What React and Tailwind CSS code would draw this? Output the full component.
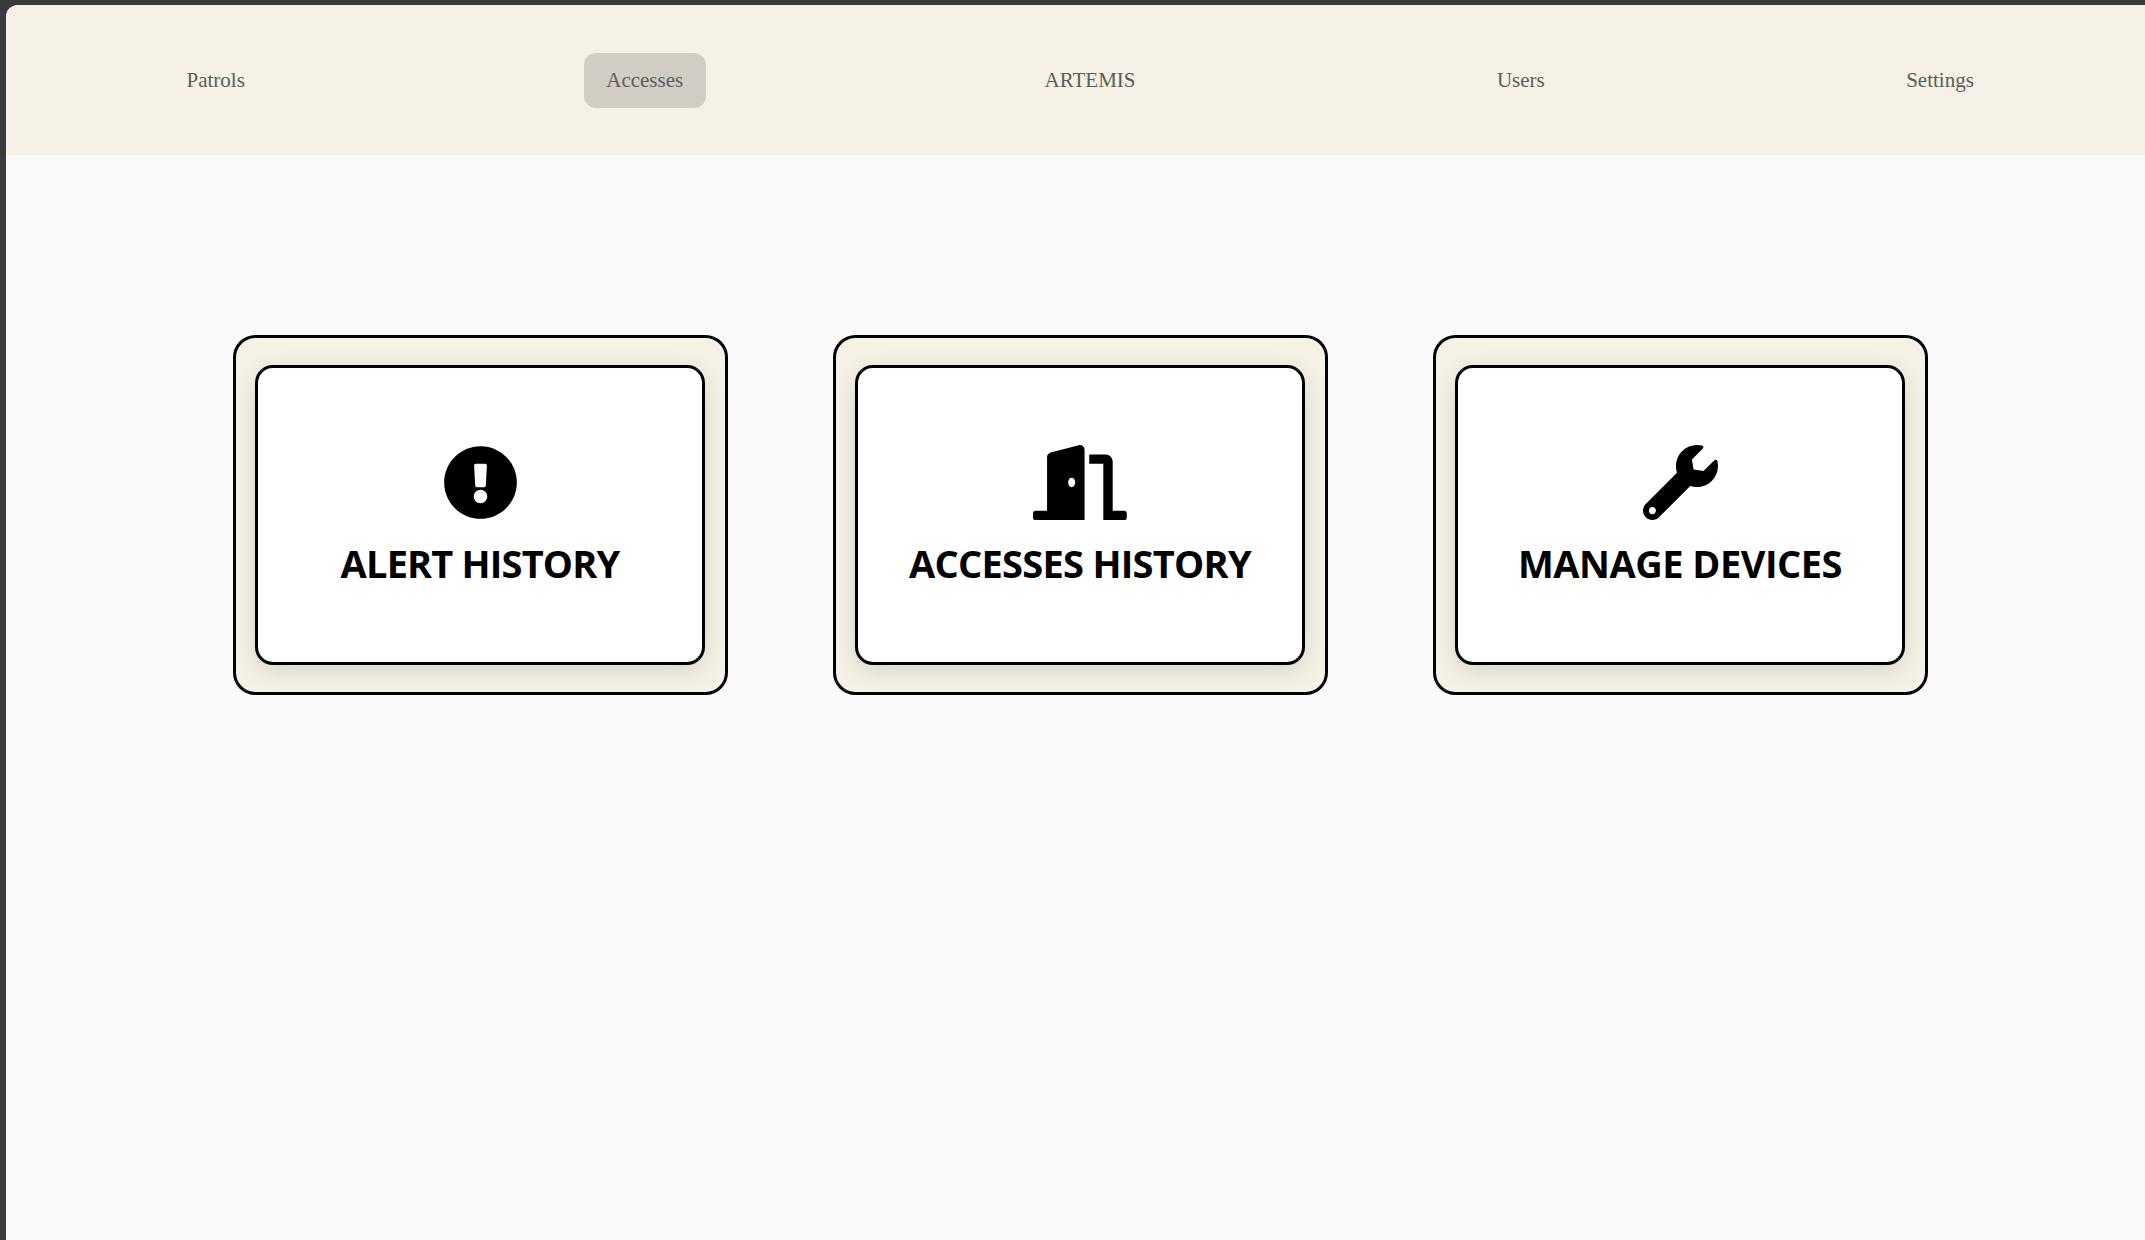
import { FaDoorOpen, FaExclamationCircle, FaWrench } from "react-icons/fa";

const navItems = [
  { label: "Patrols" },
  { label: "Accesses", active: true },
  { label: "ARTEMIS" },
  { label: "Users" },
  { label: "Settings" },
];

const cards = [
  { title: "ALERT HISTORY", Icon: FaExclamationCircle, iconWidth: "w-[75px]", tracking: "tracking-[-0.83px]" },
  { title: "ACCESSES HISTORY", Icon: FaDoorOpen, iconWidth: "w-[93.75px]", tracking: "tracking-[-0.73px]" },
  { title: "MANAGE DEVICES", Icon: FaWrench, iconWidth: "w-[75px]", tracking: "tracking-[-0.5px]" },
];

export default function App() {
  return (
    <div className="h-[1240px] w-full overflow-hidden bg-[#3b3b3b] pl-[6px] pt-[5px]">
      <div className="h-full overflow-hidden rounded-tl-[12px] bg-[#f9f9f9]">
        <nav className="flex h-[150px] items-center gap-[316.4px] bg-[#f5f1e6] pl-[158px] font-['Liberation_Serif',serif] text-[21px] text-[#5c5c5c]">
          {navItems.map((item) => (
            <a
              key={item.label}
              className={`flex h-[55px] shrink-0 items-center rounded-[12px] px-[22.5px] pt-[2px] ${item.active ? "bg-[#d2cdc4]" : ""}`}
            >
              {item.label}
            </a>
          ))}
        </nav>
        <main className="flex gap-[105px] pl-[227px] pt-[180px]">
          {cards.map(({ title, Icon, iconWidth, tracking }) => (
            <section
              key={title}
              className="flex h-[360px] w-[495px] shrink-0 flex-col items-start rounded-[22.5px] border-[3px] border-black bg-[#f5f1e6] pl-[19px] pt-[27px]"
            >
              <div className="flex h-[300px] w-[450px] flex-col items-center rounded-[18px] border-[3px] border-black bg-white pt-[77px] shadow-[0_6px_24px_rgba(0,0,0,0.12)]">
                <Icon className={`h-[75px] shrink-0 ${iconWidth}`} />
                <h2 className={`mt-[16px] whitespace-nowrap font-['Open_Sans',sans-serif] text-[38px] font-bold leading-[55px] ${tracking}`}>
                  {title}
                </h2>
              </div>
            </section>
          ))}
        </main>
      </div>
    </div>
  );
}
